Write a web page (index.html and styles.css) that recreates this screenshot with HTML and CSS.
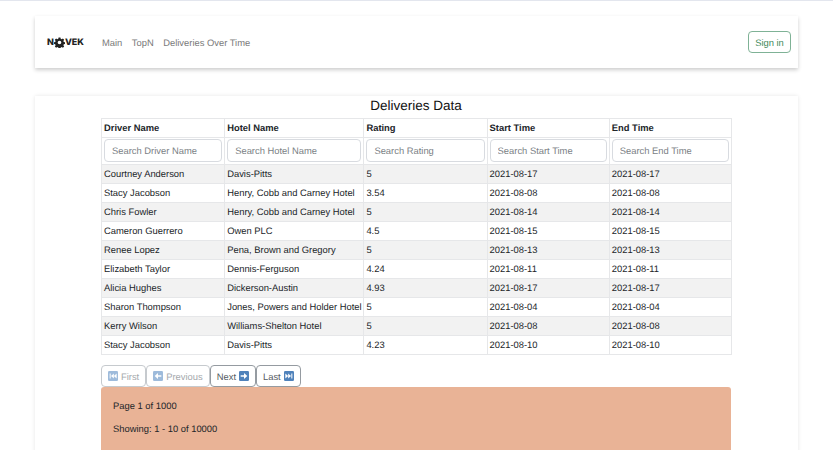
FILE: index.html
```html
<!DOCTYPE html>
<html lang="en">
<head>
    <meta charset="UTF-8">
    <title>Deliveries Data</title>
    <link rel="stylesheet" href="styles.css">
</head>
<body>
    <nav class="navbar">
        <div class="nav-left">
            <span class="brand">N<svg class="gear" viewBox="0 0 24 24"><path fill-rule="evenodd" fill="#222" d="M10 1h4l.6 3 2.2.9 2.6-1.7 2.8 2.8-1.7 2.6.9 2.2 3 .6v4l-3 .6-.9 2.2 1.7 2.6-2.8 2.8-2.6-1.7-2.2.9-.6 3h-4l-.6-3-2.2-.9-2.6 1.7-2.8-2.8 1.7-2.6-.9-2.2-3-.6v-4l3-.6.9-2.2-1.7-2.6 2.8-2.8 2.6 1.7 2.2-.9zM12 8a4 4 0 1 0 0 8 4 4 0 0 0 0-8z"/></svg>VEK</span>
            <a class="nav-link" href="#">Main</a>
            <a class="nav-link" href="#">TopN</a>
            <a class="nav-link" href="#">Deliveries Over Time</a>
        </div>
        <button class="btn btn-signin" type="button">Sign in</button>
    </nav>

    <main class="card">
        <h2 class="title">Deliveries Data</h2>
        <table class="data-table">
            <colgroup>
                <col class="col-driver">
                <col class="col-hotel">
                <col class="col-rating">
                <col class="col-start">
                <col class="col-end">
            </colgroup>
            <thead>
                <tr>
                    <th>Driver Name</th>
                    <th>Hotel Name</th>
                    <th>Rating</th>
                    <th>Start Time</th>
                    <th>End Time</th>
                </tr>
                <tr class="filters">
                    <th><input type="text" placeholder="Search Driver Name"></th>
                    <th><input type="text" placeholder="Search Hotel Name"></th>
                    <th><input type="text" placeholder="Search Rating"></th>
                    <th><input type="text" placeholder="Search Start Time"></th>
                    <th><input type="text" placeholder="Search End Time"></th>
                </tr>
            </thead>
            <tbody>
                <tr><td>Courtney Anderson</td><td>Davis-Pitts</td><td>5</td><td>2021-08-17</td><td>2021-08-17</td></tr>
                <tr><td>Stacy Jacobson</td><td>Henry, Cobb and Carney Hotel</td><td>3.54</td><td>2021-08-08</td><td>2021-08-08</td></tr>
                <tr><td>Chris Fowler</td><td>Henry, Cobb and Carney Hotel</td><td>5</td><td>2021-08-14</td><td>2021-08-14</td></tr>
                <tr><td>Cameron Guerrero</td><td>Owen PLC</td><td>4.5</td><td>2021-08-15</td><td>2021-08-15</td></tr>
                <tr><td>Renee Lopez</td><td>Pena, Brown and Gregory</td><td>5</td><td>2021-08-13</td><td>2021-08-13</td></tr>
                <tr><td>Elizabeth Taylor</td><td>Dennis-Ferguson</td><td>4.24</td><td>2021-08-11</td><td>2021-08-11</td></tr>
                <tr><td>Alicia Hughes</td><td>Dickerson-Austin</td><td>4.93</td><td>2021-08-17</td><td>2021-08-17</td></tr>
                <tr><td>Sharon Thompson</td><td>Jones, Powers and Holder Hotel</td><td>5</td><td>2021-08-04</td><td>2021-08-04</td></tr>
                <tr><td>Kerry Wilson</td><td>Williams-Shelton Hotel</td><td>5</td><td>2021-08-08</td><td>2021-08-08</td></tr>
                <tr><td>Stacy Jacobson</td><td>Davis-Pitts</td><td>4.23</td><td>2021-08-10</td><td>2021-08-10</td></tr>
            </tbody>
        </table>

        <div class="pager">
            <button class="btn btn-page" type="button" disabled><svg class="emoji" viewBox="0 0 12 12"><rect width="12" height="12" rx="1.5" fill="#5f8fc4"/><path fill="#fff" d="M2 3h1.200v6H2zM7 3v6L3.600 6zM10.400 3v6L7 6z"/></svg>First</button>
            <button class="btn btn-page" type="button" disabled><svg class="emoji" viewBox="0 0 12 12"><rect width="12" height="12" rx="1.5" fill="#5f8fc4"/><path fill="#fff" d="M2 6l4-3.600V5h4v2H6v2.600z"/></svg>Previous</button>
            <button class="btn btn-page" type="button">Next<svg class="emoji emoji-end" viewBox="0 0 12 12"><rect width="12" height="12" rx="1.5" fill="#4f82bb"/><path fill="#fff" d="M10 6L6 2.400V5H2v2h4v2.600z"/></svg></button>
            <button class="btn btn-page" type="button">Last<svg class="emoji emoji-end" viewBox="0 0 12 12"><rect width="12" height="12" rx="1.5" fill="#4f82bb"/><path fill="#fff" d="M10 3H8.800v6H10zM5 3v6l3.400-3zM1.600 3v6L5 6z"/></svg></button>
        </div>

        <div class="page-info">
            <p>Page 1 of 1000</p>
            <p>Showing: 1 - 10 of 10000</p>
        </div>
    </main>
</body>
</html>
```
FILE: styles.css
```css
html, body {
    height: 450px;
    overflow: hidden;
}
body {
    margin: 0;
    box-sizing: border-box;
    background-color: #fff;
    border-top: 1px solid #e3e6ee;
    font-family: "Liberation Sans", Arial, sans-serif;
    font-size: 9.4px;
    color: #212529;
    text-rendering: geometricPrecision;
}
.navbar {
    display: flex;
    align-items: center;
    justify-content: space-between;
    height: 52px;
    margin: 15px 35px 0 35px;
    padding: 0 7px 0 12px;
    background: #fff;
    box-shadow: 0 2px 4px rgba(0, 0, 0, 0.2);
}
.nav-left {
    display: flex;
    align-items: center;
}
.brand {
    display: flex;
    align-items: center;
    width: 55px;
    font-family: Inter, sans-serif;
    font-size: 9px;
    font-weight: 800;
    color: #222;
}
.gear {
    width: 11px;
    height: 11px;
}
.nav-link {
    margin-right: 9.5px;
    color: #7a7a7a;
    text-decoration: none;
}
.btn {
    background: #fff;
    font-family: inherit;
    font-size: 9.4px;
    border-radius: 4px;
    text-rendering: geometricPrecision;
}
.btn-signin {
    width: 43px;
    height: 22px;
    padding: 0;
    border: 1px solid #7fb296;
    color: #3f8a5c;
}
.card {
    height: 400px;
    margin: 28px 35px 0 35px;
    padding: 0 67px 0 66px;
    background: #fff;
    box-shadow: 0 0 4px rgba(0, 0, 0, 0.1);
}
.title {
    margin: 0;
    height: 22px;
    line-height: 20px;
    font-size: 13.5px;
    font-weight: 400;
    text-align: center;
    color: #111;
}
.data-table {
    width: 631px;
    table-layout: fixed;
    border-collapse: collapse;
    border: 1px solid #e6e7e9;
}
.col-driver { width: 123px; }
.col-hotel { width: 139px; }
.col-rating { width: 123px; }
.col-start { width: 122px; }
.col-end { width: 122px; }
.data-table th,
.data-table td {
    height: 17px;
    padding: 0 2px 1px;
    border: 1px solid #e6e7e9;
    text-align: left;
    white-space: nowrap;
    overflow: hidden;
}
.data-table th {
    font-weight: 700;
}
.data-table .filters th {
    height: 23px;
    padding: 1px 2px 2px;
}
.filters input {
    display: block;
    width: 100%;
    height: 23px;
    box-sizing: border-box;
    padding: 0 7px;
    border: 1px solid #d8dbe0;
    border-radius: 4px;
    font-family: inherit;
    font-size: 9.4px;
    text-rendering: geometricPrecision;
}
.filters input::placeholder {
    color: #7b7f85;
}
.data-table tbody tr:nth-child(odd) {
    background-color: #f2f2f2;
}
.pager {
    display: flex;
    margin-top: 10px;
}
.btn-page {
    display: flex;
    align-items: center;
    height: 22px;
    padding: 0 6px;
    border: 1px solid #959ba1;
    color: #555c63;
}
.btn-page:disabled {
    border-color: #c6cace;
    color: #a5a9ad;
}
.btn-page:disabled .emoji {
    opacity: 0.6;
}
.emoji {
    width: 10px;
    height: 10px;
    margin-right: 3px;
}
.emoji-end {
    margin: 0 0 0 3px;
}
.page-info {
    height: 100px;
    padding: 13px 12px;
    background-color: #e9b396;
    border-radius: 3px 3px 0 0;
}
.page-info p {
    margin: 0 0 11px;
    line-height: 12px;
}
```
